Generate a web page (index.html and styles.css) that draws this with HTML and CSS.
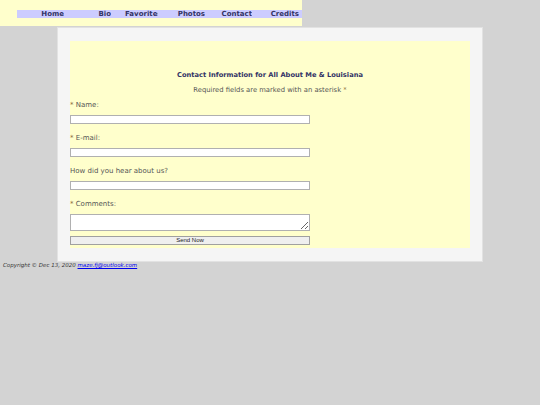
FILE: index.html
```html
<!DOCTYPE html>
<html>
<head>
<meta charset="utf-8">
<link rel="stylesheet" href="styles.css">
</head>
<body>
<div class="header">
  <nav class="nav">
    <a class="nav-item" href="#">Home</a>
    <a class="nav-item" href="#">Bio</a>
    <a class="nav-item" href="#">Favorites</a>
    <a class="nav-item" href="#">Photos</a>
    <a class="nav-item" href="#">Contact</a>
    <a class="nav-item" href="#">Credits</a>
  </nav>
</div>
<div class="main">
  <div class="content">
    <h2 class="title">Contact Information for All About Me &amp; Louisiana</h2>
    <p class="note">Required fields are marked with an asterisk <span class="star">*</span></p>
    <form class="form">
      <div class="label"><span class="star">*</span> Name:</div>
      <input class="field" type="text">
      <div class="label"><span class="star">*</span> E-mail:</div>
      <input class="field" type="text">
      <div class="label">How did you hear about us?</div>
      <input class="field" type="text">
      <div class="label"><span class="star">*</span> Comments:</div>
      <textarea class="area"></textarea>
      <button class="send" type="button">Send Now</button>
    </form>
  </div>
</div>
<div class="footer">Copyright © Dec 13, 2020 <a class="mail" href="#">maze.fj@outlook.com</a></div>
</body>
</html>
```
FILE: styles.css
```css
html, body {
  margin: 0;
  padding: 0;
  background: #d3d3d3;
  font-family: "DejaVu Sans", Verdana, sans-serif;
}
.header {
  width: 285px;
  background: #ffffcc;
  padding: 10px 0 8px 17px;
}
.nav {
  display: flex;
  background: #ccccff;
  height: 8px;
}
.nav-item {
  width: 33px;
  padding-left: 14px;
  text-align: right;
  overflow: hidden;
  white-space: nowrap;
  font-size: 7px;
  line-height: 8px;
  font-weight: bold;
  color: #333366;
  text-decoration: none;
}
.main {
  margin: 1px 0 0 57px;
  width: 400px;
  padding: 13px 12px 13px 12px;
  background: #f5f5f5;
  border: 1px solid #e2e2e2;
}
.content {
  background: #ffffcc;
  padding: 30px 0 3px 0;
}
.title {
  margin: 0;
  text-align: center;
  font-size: 6.7px;
  line-height: 8px;
  color: #333366;
}
.note {
  margin: 7px 0 0 0;
  text-align: center;
  font-size: 6.8px;
  line-height: 8px;
  color: #555555;
}
.star {
  color: #8a6a3a;
}
.form {
  display: flex;
  flex-direction: column;
  align-items: flex-start;
}
.label {
  margin-top: 7px;
  font-size: 7px;
  line-height: 8px;
  color: #555555;
}
.field {
  box-sizing: border-box;
  width: 240px;
  height: 9px;
  margin: 6px 0 3px 0;
  padding: 0;
  border: 1px solid #b0b0b0;
  background: #fff;
}
.area {
  box-sizing: border-box;
  width: 240px;
  height: 17px;
  margin: 6px 0 0 0;
  padding: 0;
  border: 1px solid #b0b0b0;
  background: #fff;
}
.send {
  box-sizing: border-box;
  width: 240px;
  height: 9px;
  margin-top: 5px;
  padding: 0;
  border: 1px solid #a0a0a0;
  background: #efefef;
  font-family: "Liberation Sans", Arial, sans-serif;
  font-size: 6px;
  line-height: 7px;
  color: #222;
}
.footer {
  padding: 0 0 0 3px;
  margin-top: 0;
  font-size: 5.5px;
  line-height: 7px;
  font-style: italic;
  color: #333;
}
.mail {
  color: #0000ee;
}
```
